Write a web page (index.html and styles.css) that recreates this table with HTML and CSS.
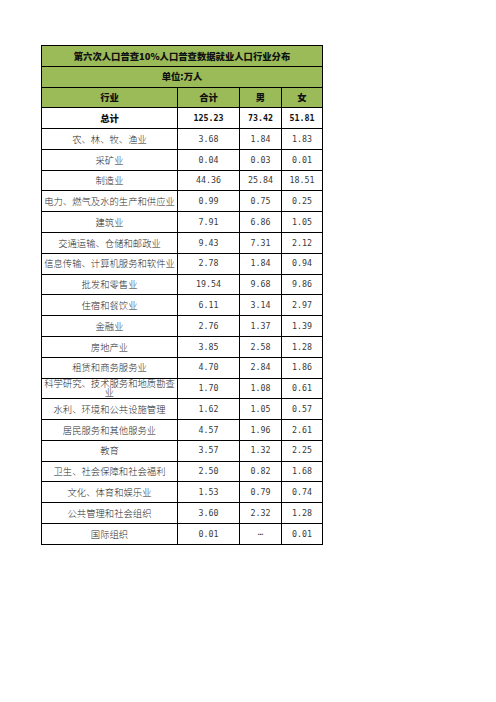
FILE: index.html
```html
<!DOCTYPE html>
<html lang="zh-CN">
<head>
<meta charset="utf-8">
<title>第六次人口普查10%人口普查数据就业人口行业分布</title>
<link rel="stylesheet" href="styles.css">
</head>
<body>
<div class="page">
  <div class="sheet">
    <div class="cell green span title">第六次人口普查10%人口普查数据就业人口行业分布</div>
    <div class="cell green span title">单位:万人</div>
    <div class="cell green head">行业</div>
    <div class="cell green head">合计</div>
    <div class="cell green head">男</div>
    <div class="cell green head">女</div>
    <div class="cell head">总计</div>
    <div class="cell num bold">125.23</div>
    <div class="cell num bold">73.42</div>
    <div class="cell num bold">51.81</div>

    <div class="cell name">农、林、牧、渔业</div><div class="cell num">3.68</div><div class="cell num">1.84</div><div class="cell num">1.83</div>
    <div class="cell name">采矿业</div><div class="cell num">0.04</div><div class="cell num">0.03</div><div class="cell num">0.01</div>
    <div class="cell name">制造业</div><div class="cell num">44.36</div><div class="cell num">25.84</div><div class="cell num">18.51</div>
    <div class="cell name">电力、燃气及水的生产和供应业</div><div class="cell num">0.99</div><div class="cell num">0.75</div><div class="cell num">0.25</div>
    <div class="cell name">建筑业</div><div class="cell num">7.91</div><div class="cell num">6.86</div><div class="cell num">1.05</div>
    <div class="cell name">交通运输、仓储和邮政业</div><div class="cell num">9.43</div><div class="cell num">7.31</div><div class="cell num">2.12</div>
    <div class="cell name">信息传输、计算机服务和软件业</div><div class="cell num">2.78</div><div class="cell num">1.84</div><div class="cell num">0.94</div>
    <div class="cell name">批发和零售业</div><div class="cell num">19.54</div><div class="cell num">9.68</div><div class="cell num">9.86</div>
    <div class="cell name">住宿和餐饮业</div><div class="cell num">6.11</div><div class="cell num">3.14</div><div class="cell num">2.97</div>
    <div class="cell name">金融业</div><div class="cell num">2.76</div><div class="cell num">1.37</div><div class="cell num">1.39</div>
    <div class="cell name">房地产业</div><div class="cell num">3.85</div><div class="cell num">2.58</div><div class="cell num">1.28</div>
    <div class="cell name">租赁和商务服务业</div><div class="cell num">4.70</div><div class="cell num">2.84</div><div class="cell num">1.86</div>
    <div class="cell name wrap">科学研究、技术服务和地质勘查业</div><div class="cell num">1.70</div><div class="cell num">1.08</div><div class="cell num">0.61</div>
    <div class="cell name">水利、环境和公共设施管理</div><div class="cell num">1.62</div><div class="cell num">1.05</div><div class="cell num">0.57</div>
    <div class="cell name">居民服务和其他服务业</div><div class="cell num">4.57</div><div class="cell num">1.96</div><div class="cell num">2.61</div>
    <div class="cell name">教育</div><div class="cell num">3.57</div><div class="cell num">1.32</div><div class="cell num">2.25</div>
    <div class="cell name">卫生、社会保障和社会福利</div><div class="cell num">2.50</div><div class="cell num">0.82</div><div class="cell num">1.68</div>
    <div class="cell name">文化、体育和娱乐业</div><div class="cell num">1.53</div><div class="cell num">0.79</div><div class="cell num">0.74</div>
    <div class="cell name">公共管理和社会组织</div><div class="cell num">3.60</div><div class="cell num">2.32</div><div class="cell num">1.28</div>
    <div class="cell name">国际组织</div><div class="cell num">0.01</div><div class="cell num">⋯</div><div class="cell num">0.01</div>
  </div>
</div>
</body>
</html>
```

FILE: styles.css
```css
html, body {
  margin: 0;
  padding: 0;
  background: #fff;
}
.page {
  padding: 45px 0 0 41px;
}
.sheet {
  display: grid;
  grid-template-columns: 135px 61px 41px 40px;
  grid-template-rows: repeat(24, 19.79px);
  gap: 1px;
  padding: 1px;
  background: #000;
  width: max-content;
  font-family: "Noto Sans CJK SC", sans-serif;
  font-size: 9.33px;
  color: #333;
}
.cell {
  background: #fff;
  display: flex;
  align-items: center;
  justify-content: center;
  text-align: center;
  line-height: 10.5px;
}
.green {
  background: #9bbb59;
}
.span {
  grid-column: 1 / -1;
}
.title, .head {
  font-weight: 900;
  color: #111;
}
.name {
  font-weight: 300;
  color: #2a2a2a;
}
.wrap {
  line-height: 9.6px;
  align-items: flex-start;
}
.num {
  font-family: "DejaVu Sans Mono", monospace;
  font-size: 8.3px;
  color: #3a3a3a;
}
.num.bold {
  font-weight: 700;
  color: #111;
}
```
